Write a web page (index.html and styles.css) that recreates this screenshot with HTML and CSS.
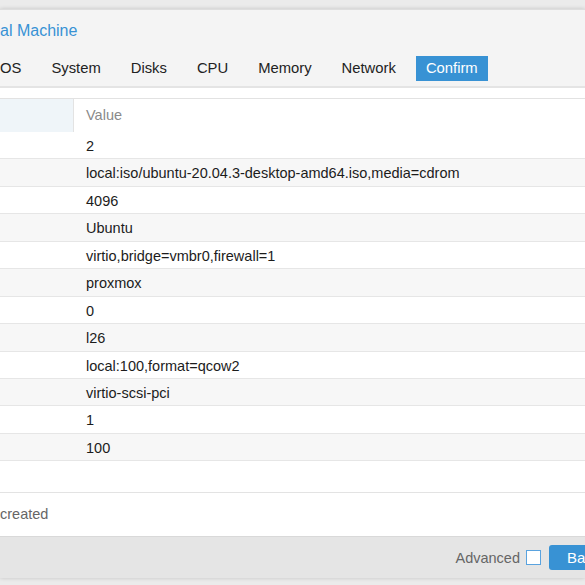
FILE: index.html
```html
<!DOCTYPE html>
<html>
<head>
<meta charset="utf-8">
<link rel="stylesheet" href="styles.css">
</head>
<body>
<div class="window">
  <div class="header">
    <div class="title">al Machine</div>
    <div class="tabs">
      <span class="tab">OS</span>
      <span class="tab">System</span>
      <span class="tab">Disks</span>
      <span class="tab">CPU</span>
      <span class="tab">Memory</span>
      <span class="tab">Network</span>
      <span class="tab active">Confirm</span>
    </div>
  </div>
  <div class="panel">
    <div class="grid">
      <div class="grid-head">
        <div class="key-col"></div>
        <div class="val-col">Value</div>
      </div>
      <div class="row"><div class="key"></div><div class="val">2</div></div>
      <div class="row"><div class="key"></div><div class="val">local:iso/ubuntu-20.04.3-desktop-amd64.iso,media=cdrom</div></div>
      <div class="row"><div class="key"></div><div class="val">4096</div></div>
      <div class="row"><div class="key"></div><div class="val">Ubuntu</div></div>
      <div class="row"><div class="key"></div><div class="val">virtio,bridge=vmbr0,firewall=1</div></div>
      <div class="row"><div class="key"></div><div class="val">proxmox</div></div>
      <div class="row"><div class="key"></div><div class="val">0</div></div>
      <div class="row"><div class="key"></div><div class="val">l26</div></div>
      <div class="row"><div class="key"></div><div class="val">local:100,format=qcow2</div></div>
      <div class="row"><div class="key"></div><div class="val">virtio-scsi-pci</div></div>
      <div class="row"><div class="key"></div><div class="val">1</div></div>
      <div class="row"><div class="key"></div><div class="val">100</div></div>
    </div>
    <div class="filler"></div>
    <div class="start">created</div>
  </div>
  <div class="footer">
    <span class="adv">Advanced</span>
    <span class="checkbox"></span>
    <span class="btn">Back</span>
  </div>
</div>
</body>
</html>
```

FILE: styles.css
```css
html, body {
  margin: 0;
  padding: 0;
  background: #ebebeb;
  overflow: hidden;
  height: 585px;
  font-family: "Liberation Sans", Arial, Helvetica, sans-serif;
}
.window {
  margin-top: 9px;
  background: #fff;
  box-shadow: 0 0 4px rgba(0,0,0,0.18);
  border-top: 1px solid #dedede;
}
.header {
  background: #f4f4f4;
  padding: 11px 0 5px 0;
}
.title {
  color: #3892d4;
  font-size: 16px;
  line-height: 20px;
  height: 20px;
}
.tabs {
  display: flex;
  gap: 10px;
  margin-top: 15px;
  margin-left: -10px;
}
.tab {
  padding: 0 10px;
  height: 25px;
  line-height: 25px;
  font-size: 14.8px;
  color: #222;
  white-space: nowrap;
}
.tab.active {
  background: #3892d4;
  color: #fff;
  padding: 0 10px;
}
.panel {
  border-top: 2px solid #e4e4e4;
  padding-top: 10px;
  background: #fff;
}
.grid {
  border-top: 1px solid #e2e2e2;
}
.grid-head {
  display: flex;
  height: 33px;
}
.key-col {
  width: 73px;
  background: #eff5f9;
  border-right: 1px solid #e3e3e3;
}
.val-col {
  padding-left: 12px;
  line-height: 32px;
  font-size: 14.5px;
  color: #8a8a8a;
}
.row {
  display: flex;
  height: 26.45px;
  border-bottom: 1px solid #e6e6e6;
}
.row:nth-child(odd) {
  background: #f7f7f7;
}
.key {
  width: 74px;
}
.val {
  padding-left: 12px;
  font-size: 14.5px;
  line-height: 28px;
  color: #1c1c1c;
  white-space: nowrap;
}
.filler {
  height: 31px;
  border-bottom: 1px solid #e3e3e3;
}
.start {
  height: 43px;
  line-height: 42px;
  font-size: 14.5px;
  color: #666;
}
.footer {
  background: #e5e5e5;
  border-top: 1px solid #d9d9d9;
  height: 41px;
  display: flex;
  align-items: center;
  justify-content: flex-end;
  margin-right: -40px;
}
.adv {
  font-size: 14.5px;
  color: #666;
  margin-right: 6px;
}
.checkbox {
  width: 13px;
  height: 13px;
  border: 1px solid #5aa3df;
  background: #fff;
  margin-right: 8px;
}
.btn {
  background: #3892d4;
  color: #fff;
  font-size: 15px;
  height: 25px;
  line-height: 25px;
  padding: 0 18px;
  border-radius: 3px;
  width: 40px;
}
```
